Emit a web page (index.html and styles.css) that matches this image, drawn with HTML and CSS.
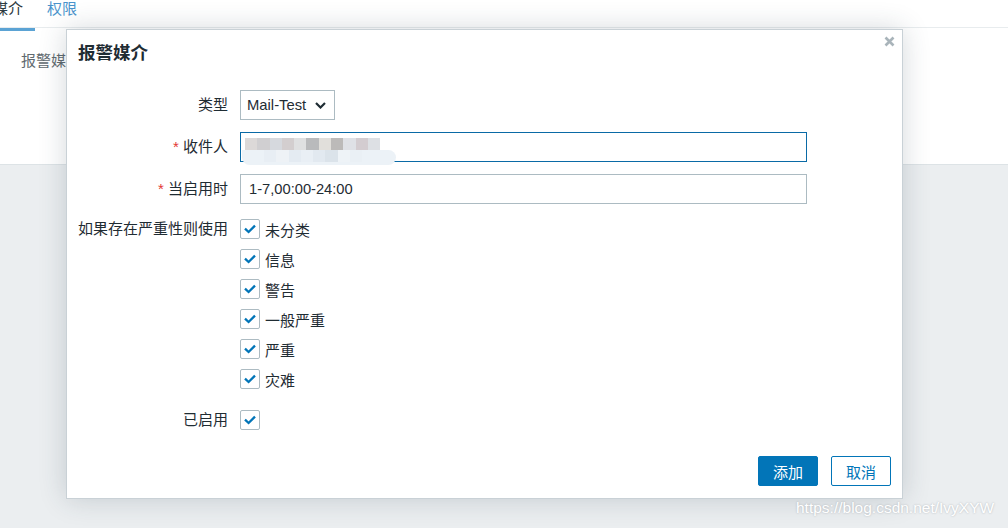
FILE: index.html
```html
<!DOCTYPE html>
<html lang="zh">
<head>
<meta charset="utf-8">
<title>报警媒介</title>
<link rel="stylesheet" href="styles.css">
</head>
<body>
<div class="page">
  <div class="tabs">
    <div class="tab active">媒介</div>
    <div class="tab">权限</div>
  </div>
  <div class="panel">
    <div class="panel-label">报警媒介</div>
  </div>
  <div class="rest"></div>
</div>

<div class="dialog">
  <div class="dialog-head">
    <h2 class="title">报警媒介</h2>
    <span class="close">
      <svg width="11" height="11" viewBox="0 0 11 11"><path d="M1.5 1.5 L9.5 9.5 M9.5 1.5 L1.5 9.5" stroke="#a9b4ba" stroke-width="2.6" stroke-linecap="butt"/></svg>
    </span>
  </div>

  <div class="form">
    <div class="row">
      <div class="lbl">类型</div>
      <div class="select">
        <span class="select-text">Mail-Test</span>
        <svg class="chev" width="11" height="7" viewBox="0 0 11 7"><path d="M1 1 L5.5 5.5 L10 1" fill="none" stroke="#1f2c33" stroke-width="2.2"/></svg>
      </div>
    </div>
    <div class="row gap12">
      <div class="lbl"><span class="req">*</span> 收件人</div>
      <div class="field">
        <input class="inp focus" type="text" value="">
        <div class="blur">
          <div class="blob"></div>
          <div class="pix">
            <i style="background:#dcd9d8"></i><i style="background:#d0cfd1"></i><i style="background:#d6d9de"></i><i style="background:#d3cecf"></i><i style="background:#dfe0e1"></i><i style="background:#b9babc"></i><i style="background:#e1dfdb"></i><i style="background:#bcbab9"></i><i style="background:#dfe1e6"></i><i style="background:#d3ccd0"></i><i style="background:#dde0e4"></i>
          </div>
          <div class="pix2">
            <i style="background:#e8eef4"></i><i style="background:#eef2f6"></i><i style="background:#e4ebf2"></i><i style="background:#e9eff5"></i><i style="background:#e2e9f0"></i><i style="background:#dbe3ea"></i><i style="background:#eef3f7"></i><i style="background:#eaf0f5"></i>
          </div>
        </div>
      </div>
    </div>
    <div class="row gap12">
      <div class="lbl"><span class="req">*</span> 当启用时</div>
      <input class="inp" type="text" value="1-7,00:00-24:00">
    </div>
    <div class="row top sev">
      <div class="lbl tall">如果存在严重性则使用</div>
      <div class="checks">
        <label class="chk"><span class="box"><svg width="20" height="20" viewBox="0 0 20 20"><path d="M5 9.6 L8.6 13 L15 6.6" fill="none" stroke="#0275b8" stroke-width="2.3"/></svg></span>未分类</label>
        <label class="chk"><span class="box"><svg width="20" height="20" viewBox="0 0 20 20"><path d="M5 9.6 L8.6 13 L15 6.6" fill="none" stroke="#0275b8" stroke-width="2.3"/></svg></span>信息</label>
        <label class="chk"><span class="box"><svg width="20" height="20" viewBox="0 0 20 20"><path d="M5 9.6 L8.6 13 L15 6.6" fill="none" stroke="#0275b8" stroke-width="2.3"/></svg></span>警告</label>
        <label class="chk"><span class="box"><svg width="20" height="20" viewBox="0 0 20 20"><path d="M5 9.6 L8.6 13 L15 6.6" fill="none" stroke="#0275b8" stroke-width="2.3"/></svg></span>一般严重</label>
        <label class="chk"><span class="box"><svg width="20" height="20" viewBox="0 0 20 20"><path d="M5 9.6 L8.6 13 L15 6.6" fill="none" stroke="#0275b8" stroke-width="2.3"/></svg></span>严重</label>
        <label class="chk"><span class="box"><svg width="20" height="20" viewBox="0 0 20 20"><path d="M5 9.6 L8.6 13 L15 6.6" fill="none" stroke="#0275b8" stroke-width="2.3"/></svg></span>灾难</label>
      </div>
    </div>
    <div class="row enabled">
      <div class="lbl">已启用</div>
      <label class="chk"><span class="box"><svg width="20" height="20" viewBox="0 0 20 20"><path d="M5 9.6 L8.6 13 L15 6.6" fill="none" stroke="#0275b8" stroke-width="2.3"/></svg></span></label>
    </div>
  </div>

  <div class="foot">
    <button class="btn primary" type="button">添加</button>
    <button class="btn secondary" type="button">取消</button>
  </div>
</div>

<div class="watermark">https://blog.csdn.net/IvyXYW</div>
</body>
</html>
```

FILE: styles.css
```css
html, body {
  margin: 0;
  padding: 0;
}
body {
  width: 1008px;
  height: 528px;
  overflow: hidden;
  position: relative;
  font-family: "Liberation Sans", "Noto Sans CJK SC", sans-serif;
  color: #1f2c33;
  background: #ebeef0;
}

.page {
  display: flex;
  flex-direction: column;
  height: 528px;
}

.tabs {
  height: 28px;
  box-sizing: border-box;
  border-bottom: 1px solid #e8ecee;
  background: #fff;
  display: flex;
  margin-left: -20px;
}
.tab {
  position: relative;
  padding: 0 12px 0 13px;
  font-size: 15px;
  line-height: 18px;
  color: #4a93cc;
}
.tab + .tab {
  padding-left: 12px;
}
.tab.active {
  color: #2f3b42;
}
.tab.active::after {
  content: "";
  position: absolute;
  left: 0;
  right: 0;
  bottom: -4px;
  height: 3px;
  background: #5ba3d4;
}

.panel {
  height: 137px;
  box-sizing: border-box;
  background: #fff;
  border-bottom: 1px solid #dde3e6;
  padding: 23px 0 0 21px;
}
.panel-label {
  font-size: 15px;
  line-height: 20px;
  color: #5f6a70;
}
.rest {
  flex: 1;
  background: #ebeef0;
}

.dialog {
  position: absolute;
  left: 66px;
  top: 29px;
  width: 837px;
  height: 470px;
  box-sizing: border-box;
  border: 1px solid #c9d1d6;
  background: #fff;
  box-shadow: 0 0 26px rgba(40, 60, 75, 0.2);
  display: flex;
  flex-direction: column;
}
.dialog-head {
  position: relative;
  padding: 11px 11px 0;
}
.title {
  margin: 0;
  font-size: 17.5px;
  line-height: 24px;
  font-weight: bold;
  color: #1f2c33;
}
.close {
  position: absolute;
  right: 7px;
  top: 6px;
  width: 11px;
  height: 11px;
}
.close svg {
  display: block;
}

.form {
  margin-top: 25px;
  padding-left: 11px;
  display: flex;
  flex-direction: column;
}
.row {
  display: flex;
  align-items: center;
  gap: 12px;
  min-height: 30px;
}
.row.top {
  align-items: flex-start;
}
.gap12 {
  margin-top: 12px;
}
.sev {
  margin-top: 10px;
}
.enabled {
  margin-top: 11px;
}
.lbl {
  width: 150px;
  flex: none;
  text-align: right;
  font-size: 15px;
  line-height: 20px;
  color: #1f2c33;
  white-space: nowrap;
}
.lbl.tall {
  line-height: 30px;
}
.req {
  color: #e33734;
}

.select {
  width: 95px;
  height: 30px;
  box-sizing: border-box;
  border: 1px solid #acbbc2;
  display: flex;
  align-items: center;
  justify-content: space-between;
  padding: 0 8px 0 6px;
}
.select-text {
  font-size: 14.8px;
  color: #1f2c33;
}
.chev {
  display: block;
}

.field {
  position: relative;
  width: 567px;
  height: 30px;
}
.inp {
  width: 567px;
  height: 30px;
  box-sizing: border-box;
  border: 1px solid #acbbc2;
  border-radius: 0;
  padding: 0 8px;
  margin: 0;
  font-family: "Liberation Sans", "Noto Sans CJK SC", sans-serif;
  font-size: 14.7px;
  color: #1f2c33;
  background: #fff;
  outline: none;
}
.inp.focus {
  border-color: #0a6aa6;
}
.blur {
  position: absolute;
  left: 0;
  top: 4px;
  width: 160px;
  height: 30px;
}
.blob {
  position: absolute;
  left: 2px;
  top: 14px;
  width: 154px;
  height: 15px;
  border-radius: 0 8px 8px 8px;
  background: #ecf2f7;
}
.pix, .pix2 {
  position: absolute;
  display: flex;
}
.pix {
  left: 5px;
  top: 2px;
}
.pix i {
  display: block;
  width: 12.3px;
  height: 12px;
}
.pix2 {
  left: 24px;
  top: 14px;
}
.pix2 i {
  display: block;
  width: 12.3px;
  height: 12px;
}

.checks {
  display: flex;
  flex-direction: column;
}
.chk {
  display: flex;
  align-items: center;
  height: 30px;
  font-size: 15px;
  color: #1f2c33;
}
.box {
  width: 20px;
  height: 20px;
  box-sizing: border-box;
  border: 1px solid #acbbc2;
  border-radius: 2px;
  background: #fff;
  margin-right: 5px;
  position: relative;
}
.box svg {
  position: absolute;
  left: -1px;
  top: -1px;
}

.foot {
  margin-top: auto;
  display: flex;
  justify-content: flex-end;
  gap: 13px;
  padding: 0 11px 12px;
}
.btn {
  width: 60px;
  height: 30px;
  box-sizing: border-box;
  border-radius: 2px;
  font-family: "Liberation Sans", "Noto Sans CJK SC", sans-serif;
  font-size: 15px;
  padding: 0;
  margin: 0;
  cursor: pointer;
}
.btn.primary {
  background: #0275b8;
  border: 1px solid #0275b8;
  color: #fff;
}
.btn.secondary {
  background: #fff;
  border: 1px solid #0275b8;
  color: #0275b8;
}

.watermark {
  position: absolute;
  left: 796px;
  top: 498px;
  font-family: "Liberation Sans", sans-serif;
  font-size: 15.5px;
  line-height: 20px;
  color: #ffffff;
  text-shadow: 0 0 2px rgba(60, 70, 80, 0.35);
  white-space: nowrap;
}
```
